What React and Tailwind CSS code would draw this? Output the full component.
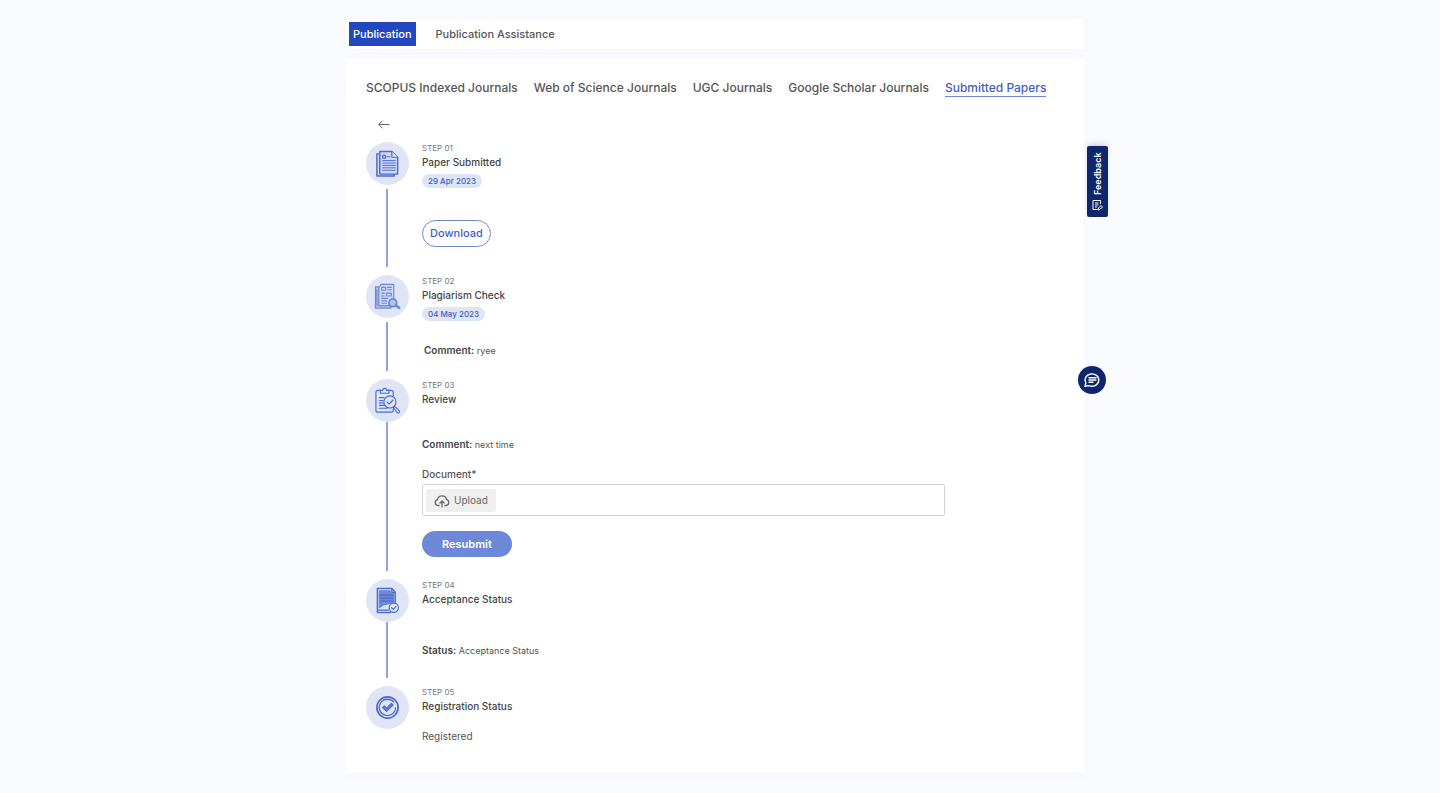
import React, { useState } from 'react';

const JOURNAL_TABS = [
  'SCOPUS Indexed Journals',
  'Web of Science Journals',
  'UGC Journals',
  'Google Scholar Journals',
  'Submitted Papers'
];

const iconProps = {
  viewBox: '0 0 28 28',
  fill: 'none',
  stroke: 'currentColor',
  strokeWidth: 1.2,
  strokeLinecap: 'round',
  strokeLinejoin: 'round',
  className: 'size-[27px]',
  'aria-hidden': true
};

const PaperIcon = () => (
  <svg {...iconProps}>
    <path d="M6.500 4h-3.500v23h18v-2.500" fill="#cfd9f5" strokeWidth="1.500" />
    <path d="M6 1.500h12.500l6 6v17.500H6z" fill="#cfd9f5" strokeWidth="1.500" />
    <path d="M18.500 1.500v6h6" fill="#e0e5f6" />
    <circle cx="10.500" cy="7" r="1.700" strokeWidth="1.500" />
    <path d="M14 7h2.500M9 11h13M9 13.500h13M9 16h13M9 18.500h13M9 21h13" strokeWidth="1" />
  </svg>
);

const PlagiarismIcon = () => (
  <svg {...iconProps} strokeWidth="1.200" stroke="#6d88d7">
    <path d="M4.500 4h-3v22h16v-2.500" fill="#b4c2ee" />
    <path d="M5 4.500 7.500 1.500h13v16L17 23.500H5z" fill="#cfd9f5" />
    <path d="M8 4.500h4v3H8zM14 4.500h4M14 7h4M8 10.500h3M13 10.500h5v3h-5zM7.500 13.500h3M8 16h6M8 18.500h5M8 21h5M3 7v16" />
    <circle cx="19.500" cy="20.500" r="4" fill="#b4c2ee" strokeWidth="1.900" />
    <path d="m23 23.500 3 2.200" strokeWidth="2.800" />
  </svg>
);

const ReviewIcon = () => (
  <svg {...iconProps}>
    <path d="M7 3.500H4a2 2 0 0 0-2 2V24a2 2 0 0 0 2 2h14a2 2 0 0 0 2-2v-1M20 9V5.500a2 2 0 0 0-2-2h-3" />
    <path d="M6.500 6.500v-3H9a2 2 0 0 1 4 0h2.500v3z" />
    <path d="M5.500 11h5M5.500 14h4M5.500 16.500h4M5.500 19h5M5.500 22h8" />
    <circle cx="16.500" cy="15.500" r="6.300" fill="#e0e5f6" />
    <path d="m13.500 15.500 2.200 2.200 4-4.200" />
    <path d="m20 21.500 1.500-1.500 4.500 4.500a1.200 1.200 0 0 1-2 2z" />
  </svg>
);

const AcceptanceIcon = () => (
  <svg {...iconProps}>
    <path d="M17 26.500H3.500v-25h15l3.500 4v12" strokeWidth="1.500" />
    <path d="M5.500 4h11l1.500 2.500h2.500V16L10 18.500l-4.500 3z" fill="#6d88d7" stroke="#6d88d7" />
    <path d="M6 8.500h14M6 11.500h14M6 14.500h14" strokeWidth="1.200" />
    <path d="M18.500 1.500v4H22M4 24h11" />
    <circle cx="20.500" cy="21.500" r="4.800" fill="#e0e5f6" />
    <path d="m18.300 21.500 1.700 1.700 2.800-3" />
  </svg>
);

const RegistrationIcon = () => (
  <svg {...iconProps}>
    <circle cx="14" cy="14" r="11" strokeWidth="1.800" />
    <path d="M20.500 8.500A8.500 8.500 0 1 0 22.400 14M17 6.200a8.500 8.500 0 0 0-6 0" />
    <path d="m9 14 1.700-1.600 2.300 2.300 5-5 1.700 1.700-6.700 6.600z" fill="#6d88d7" />
  </svg>
);

const Step = ({ number, title, date, icon, lineClass, className, children }) => (
  <li className="flex gap-[13px]">
    <div className="flex w-[43px] shrink-0 flex-col items-center">
      <div className="flex size-[43px] shrink-0 items-center justify-center rounded-full bg-[#e0e5f6] text-[#4a6bd0]">
        {icon}
      </div>
      {lineClass && <div className={`mr-px w-[2px] flex-1 bg-[#8fa3e3] ${lineClass}`} />}
    </div>
    <div className={`min-w-0 flex-1 ${className}`}>
      <p className="text-[8px] leading-3 text-[#777]">STEP {number}</p>
      <h2 className="text-[10px] leading-4 font-medium text-[#444]">{title}</h2>
      {date && (
        <time className="mt-1 block w-fit rounded-full bg-[#e0e5f6] px-[6px] text-[8px] leading-[14px] font-medium text-[#3f5fc4]">
          {date}
        </time>
      )}
      {children}
    </div>
  </li>
);

const Note = ({ label, text, className }) => (
  <p className={`text-[9px] leading-4 text-[#555] ${className}`}>
    <span className="text-[10px] font-semibold text-[#444]">{label}:</span> {text}
  </p>
);

export default function App() {
  const [activeTab, setActiveTab] = useState('Submitted Papers');

  return (
    <div className="min-h-screen bg-[#fafbff] pt-[19px] pr-[10px] pb-5 font-['Inter',sans-serif]">
      <div className="relative mx-auto max-w-[738px]">
        {/* Section switch */}
        <nav className="flex items-center gap-4 bg-white px-[3px] py-[3px] text-[11px] leading-6 font-medium shadow-[0_2px_10px_#f3f6ff]">
          <a href="#publication" className="bg-[#2247c0] px-1 text-white">Publication</a>
          <a href="#assistance" className="px-1 text-[#555]">Publication Assistance</a>
        </nav>

        <main className="mt-[10px] bg-white px-5 pt-[21px] shadow-[0_2px_10px_#f3f6ff]">
          {/* Journal tabs */}
          <div className="flex flex-wrap gap-x-4">
            {JOURNAL_TABS.map(tab => (
              <button
                key={tab}
                type="button"
                onClick={() => setActiveTab(tab)}
                className={`border-b text-[12px] leading-4 font-medium ${
                  activeTab === tab ? 'border-[#6d88d7] text-[#3f5fc4]' : 'border-transparent text-[#555]'
                }`}
              >
                {tab}
              </button>
            ))}
          </div>

          <button type="button" aria-label="Back" className="mt-5 ml-3 block text-[#666]">
            <svg viewBox="0 0 12 14" fill="none" stroke="currentColor" className="h-[14px] w-3" aria-hidden="true">
              <path d="M11.500 7.500H.8M4.500 3.700.8 7.500l3.700 3.800" />
            </svg>
          </button>

          <ol className="mt-[11px]">
            <Step number="01" title="Paper Submitted" date="29 Apr 2023" icon={<PaperIcon />} lineClass="mt-1 mb-2" className="pb-7">
              <button type="button" className="mt-8 block rounded-full border border-[#6d88d7] px-[7px] text-[11px] leading-[25px] font-medium text-[#3f5fc4]">
                Download
              </button>
            </Step>

            <Step number="02" title="Plagiarism Check" date="04 May 2023" icon={<PlagiarismIcon />} lineClass="mt-1 mb-2" className="pb-5">
              <Note label="Comment" text="ryee" className="mt-[21px] pl-[2px]" />
            </Step>

            <Step number="03" title="Review" icon={<ReviewIcon />} lineClass="mb-2" className="pb-[22px]">
              <Note label="Comment" text="next time" className="mt-[29px]" />
              <label htmlFor="document" className="mt-[13px] block text-[10px] leading-4 font-medium text-[#555]">Document*</label>
              <div className="mt-[2px] max-w-[523px] rounded-xs border border-[#d4d4d4] p-[3px] pt-1">
                <label className="flex w-fit cursor-pointer items-center gap-1 rounded-xs bg-[#efefef] px-2 text-[10px] leading-[23px] text-[#666]">
                  <svg viewBox="0 0 16 14" fill="none" stroke="currentColor" strokeWidth="1.300" strokeLinecap="round" strokeLinejoin="round" className="h-[14px] w-4" aria-hidden="true">
                    <path d="M5 11.500H4A3 3 0 0 1 3.500 5.600a4.600 4.600 0 0 1 9 0A3 3 0 0 1 12 11.500h-1M8 13V7.200M6 9l2-2 2 2" />
                  </svg>
                  Upload
                  <input id="document" type="file" className="sr-only" />
                </label>
              </div>
              <button type="button" className="mt-[15px] block rounded-full bg-[#6d88d7] px-5 text-[11px] leading-[26px] font-semibold text-white">
                Resubmit
              </button>
            </Step>

            <Step number="04" title="Acceptance Status" icon={<AcceptanceIcon />} lineClass="mb-2" className="pb-[27px]">
              <Note label="Status" text="Acceptance Status" className="mt-[35px]" />
            </Step>

            <Step number="05" title="Registration Status" icon={<RegistrationIcon />} className="pb-[29px]">
              <p className="mt-[14px] text-[10px] leading-4 text-[#555]">Registered</p>
            </Step>
          </ol>
        </main>

        {/* Floating actions */}
        <button
          type="button"
          className="absolute top-[127px] left-full ml-[3px] flex h-[71px] w-[21px] rotate-180 items-center justify-center gap-1 rounded-xs bg-[#10266c] text-[9px] leading-3 font-semibold text-white shadow-md [writing-mode:vertical-rl]"
        >
          <svg viewBox="0 0 12 12" fill="none" stroke="currentColor" className="size-3 shrink-0 rotate-180" aria-hidden="true">
            <path d="M9.500 5V1.500H2v9h4.500M4 4h3.500M4 6h3.500M4 8h2M7 11l.5-2L10 6.500 11.500 8 9 10.500z" />
          </svg>
          Feedback
        </button>
        <button
          type="button"
          aria-label="Chat"
          className="absolute top-[347px] left-full -ml-[6px] flex size-7 items-center justify-center rounded-full bg-[#10266c] text-white"
        >
          <svg viewBox="0 0 18 18" fill="none" stroke="currentColor" strokeWidth="1.400" strokeLinecap="round" strokeLinejoin="round" className="size-[18px]" aria-hidden="true">
            <path d="M2 15.300 2.800 12A6.900 6.200 0 1 1 5.800 14.600z" />
            <path d="M6 6.800h7M6 9h7M6 11.200h4" />
          </svg>
        </button>
      </div>
    </div>
  );
}
